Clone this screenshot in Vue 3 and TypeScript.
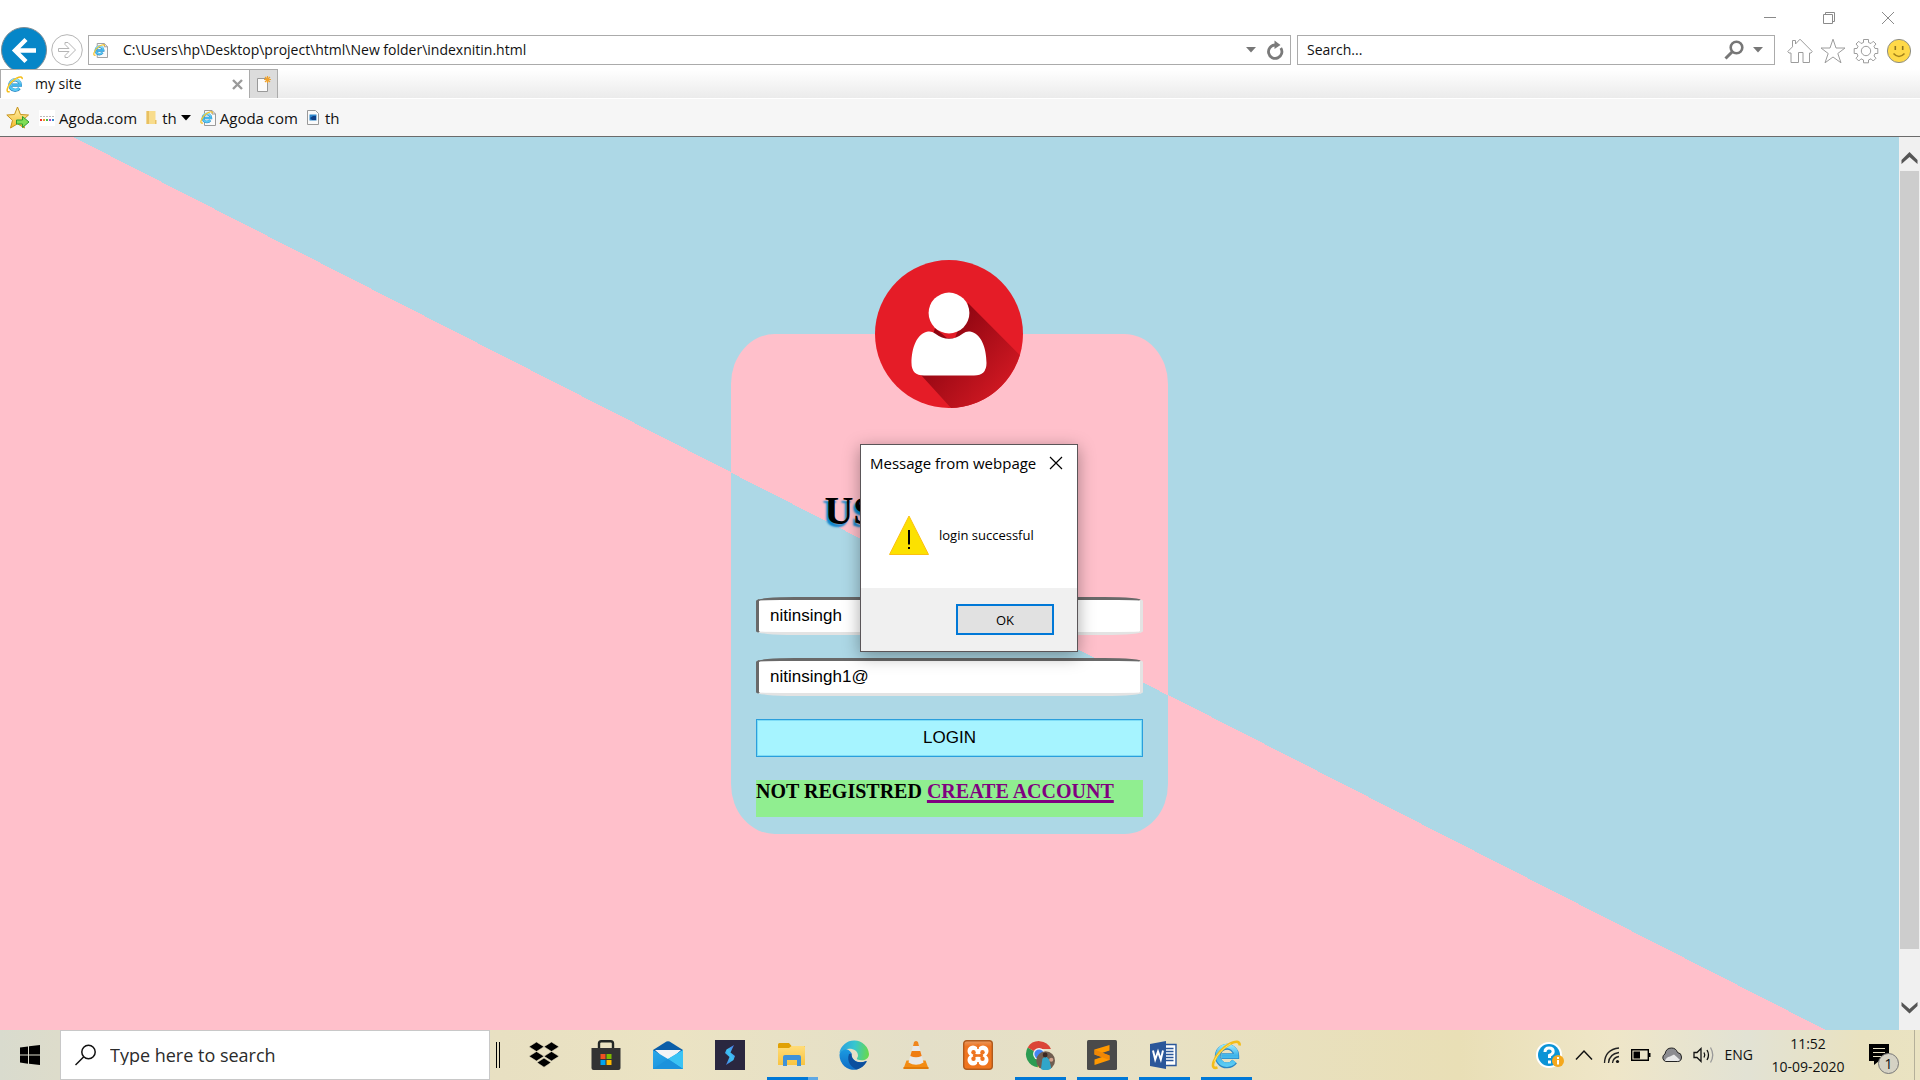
<script setup lang="ts">
import { ref } from 'vue'

interface TaskApp {
  id: string
  label: string
  state: 'idle' | 'open' | 'stacked'
}

const username = ref('nitinsingh')
const password = ref('nitinsingh1@')
const address = ref('C:\\Users\\hp\\Desktop\\project\\html\\New folder\\indexnitin.html')
const alertOpen = ref(true)

const apps: TaskApp[] = [
  { id: 'dropbox', label: 'Dropbox', state: 'idle' },
  { id: 'store', label: 'Store', state: 'idle' },
  { id: 'mail', label: 'Mail', state: 'idle' },
  { id: 'bolt', label: 'Editor', state: 'idle' },
  { id: 'folder', label: 'File Explorer', state: 'stacked' },
  { id: 'edge', label: 'Edge', state: 'idle' },
  { id: 'vlc', label: 'VLC', state: 'idle' },
  { id: 'xampp', label: 'XAMPP', state: 'idle' },
  { id: 'chrome', label: 'Chrome', state: 'open' },
  { id: 'sublime', label: 'Sublime Text', state: 'open' },
  { id: 'word', label: 'Word', state: 'open' },
  { id: 'ie', label: 'Internet Explorer', state: 'open' },
]
</script>

<template>
  <div class="screen">
    <svg class="sprites" width="0" height="0" aria-hidden="true">
      <defs>
        <linearGradient id="g-ie" x1="0" y1="0" x2="0" y2="1">
          <stop offset="0" stop-color="#8fe3fb" /><stop offset="0.5" stop-color="#3fb4ea" /><stop offset="1" stop-color="#5bcbf3" />
        </linearGradient>
        <linearGradient id="g-mail" x1="0" y1="0" x2="1" y2="1">
          <stop offset="0" stop-color="#2aa9ea" /><stop offset="1" stop-color="#1689d6" />
        </linearGradient>
        <linearGradient id="g-folder" x1="0" y1="0" x2="0" y2="1">
          <stop offset="0" stop-color="#ffdc78" /><stop offset="1" stop-color="#f9c440" />
        </linearGradient>
        <linearGradient id="g-edge-top" x1="0" y1="0.4" x2="1" y2="0.5">
          <stop offset="0" stop-color="#2a9fe0" /><stop offset="0.5" stop-color="#37c6cf" /><stop offset="1" stop-color="#68d94c" />
        </linearGradient>
        <linearGradient id="g-edge-left" x1="0" y1="0" x2="0" y2="1">
          <stop offset="0" stop-color="#1b9be3" /><stop offset="1" stop-color="#0f6cc4" />
        </linearGradient>
        <linearGradient id="g-bolt" x1="1" y1="0" x2="0" y2="1">
          <stop offset="0" stop-color="#5468e8" /><stop offset="0.5" stop-color="#3cc5f3" /><stop offset="1" stop-color="#4a6fe0" />
        </linearGradient>
        <linearGradient id="g-xampp" x1="0" y1="0" x2="0" y2="1">
          <stop offset="0" stop-color="#e89a62" /><stop offset="0.2" stop-color="#ee7420" /><stop offset="1" stop-color="#f0741c" />
        </linearGradient>
        <linearGradient id="g-shadow" x1="0.2" y1="0.2" x2="0.85" y2="0.8">
          <stop offset="0" stop-color="#8a0410" /><stop offset="1" stop-color="#cf1822" />
        </linearGradient>
        <linearGradient id="g-star" x1="0" y1="0" x2="0" y2="1">
          <stop offset="0" stop-color="#fff2b0" /><stop offset="1" stop-color="#f5bb28" />
        </linearGradient>

        <symbol id="i-ie" viewBox="0 0 30 30">
          <path d="M23.600 21.500A9.300 9.300 0 1 1 25.300 16.200H10.500" fill="none" stroke="#2b86c4" stroke-width="5.800" />
          <path d="M23.300 21.200A9.300 9.300 0 1 1 25.300 16H10.500" fill="none" stroke="url(#g-ie)" stroke-width="4.400" />
          <path d="M6.500 27.400C2.500 29 1 26.500 2.700 21.800C5 15 12.500 7 19.500 3.500C24.500 1 29.300 1 28.500 5.500" fill="none" stroke="#f4bd18" stroke-width="2.600" />
          <path d="M3.300 21.500C5.500 15 13 7.300 19.800 3.900" fill="none" stroke="#ffe56b" stroke-width="1" />
        </symbol>
        <symbol id="i-iepage" viewBox="0 0 16 16">
          <path d="M4.500 0.500H12L15.500 4V15.500H4.500Z" fill="#fafafa" stroke="#9a9a9a" />
          <path d="M12 0.500V4H15.500" fill="none" stroke="#9a9a9a" />
          <use href="#i-ie" x="0" y="1" width="13" height="13" />
        </symbol>
        <symbol id="i-dropbox" viewBox="0 0 30 30">
          <path d="M7.500 2L15 6.700L7.500 11.500L0 6.700ZM22.500 2L30 6.700L22.500 11.500L15 6.700ZM7.500 11.500L15 16.300L7.500 21L0 16.300ZM22.500 11.500L30 16.300L22.500 21L15 16.300ZM15 18L22 22.600L15 27.200L8 22.600Z" fill="#000" stroke="#e8dfc2" stroke-width="0.600" />
        </symbol>
        <symbol id="i-store" viewBox="0 0 30 30">
          <path d="M8 9V3.500Q8 1.200 10.300 1.200H19.700Q22 1.200 22 3.500V9" fill="none" stroke="#222625" stroke-width="2.400" />
          <path d="M0.500 8H29.500V28Q29.500 30 27.500 30H2.500Q0.500 30 0.500 28Z" fill="#333" />
          <path d="M9.500 14H14.500V19H9.500Z" fill="#f25022" /><path d="M15.500 14H20.500V19H15.500Z" fill="#7fba00" />
          <path d="M9.500 20H14.500V25H9.500Z" fill="#00a4ef" /><path d="M15.500 20H20.500V25H15.500Z" fill="#ffb900" />
        </symbol>
        <symbol id="i-mail" viewBox="0 0 30 30">
          <path d="M0 10L13.500 1.600Q15 0.800 16.500 1.600L30 10V14H0Z" fill="#0b5ea8" />
          <path d="M2 10H28L15 22Z" fill="#f4f4f6" />
          <path d="M0 10L15 19L30 10V29H0Z" fill="url(#g-mail)" />
          <path d="M30 10V29L15 19Z" fill="#3bc3f4" /><path d="M0 29L15 19L30 29Z" fill="#1b92dc" />
        </symbol>
        <symbol id="i-bolt" viewBox="0 0 30 30">
          <path d="M0 0H30V30H0Z" fill="#2a2740" />
          <path d="M19 5L11.500 9.500L10 13L14.500 17L11 25L18.500 20L20 16L15.500 12.500Z" fill="url(#g-bolt)" />
        </symbol>
        <symbol id="i-folder" viewBox="0 0 30 30">
          <path d="M1 4.500Q1 3 2.500 3H12L14.500 6H28V15H1Z" fill="#e0a106" />
          <path d="M1 8H12L14.500 6H27Q28 6 28 7V25H1Z" fill="url(#g-folder)" />
          <path d="M6 26V17Q6 15 8 15H22Q24 15 24 17V26H20V20H10V26Z" fill="#3f92d8" />
        </symbol>
        <symbol id="i-edge" viewBox="0 0 30 30">
          <path d="M0.500 15A14.500 14.500 0 0 0 17 29.700C20 29 25 26 27.500 21C22 24 12 22 12.500 13C8 6 1 9 0.500 15Z" fill="url(#g-edge-left)" />
          <path d="M10 14C7 22 13 28 18 29.500C22 28 25.500 26 27.700 21.700Q28 20.500 26.500 21.200C20 24 12 21 12.500 13.500Z" fill="#0c4f9e" />
          <path d="M0.300 13A15 15 0 0 1 30 14C30 20 23 21.500 18.500 19.500C17 18.500 19 18 19 15.500C19 8 7 6 0.300 13Z" fill="url(#g-edge-top)" />
        </symbol>
        <symbol id="i-vlc" viewBox="0 0 30 30">
          <path d="M5.500 20.500H24.500L27.500 28.500H2.500Z" fill="#f38c13" /><path d="M2.500 27H27.500V29H2.500Z" fill="#e27a08" />
          <path d="M13 2Q15 0 17 2L22.500 22.500Q15 27 7.500 22.500Z" fill="#e8e8e8" />
          <path d="M13 2Q15 0 17 2L18 6H12Z" fill="#f0861c" />
          <path d="M10.700 11H19.300L20.700 16Q15 18.500 9.300 16Z" fill="#ef7d14" />
        </symbol>
        <symbol id="i-xampp" viewBox="0 0 30 30">
          <rect x="0.700" y="0.700" width="28.600" height="28.600" rx="3" fill="url(#g-xampp)" stroke="#b05a1c" stroke-width="1.400" />
          <g fill="#fff">
            <circle cx="10" cy="11" r="5.500" /><circle cx="20" cy="11" r="5.500" />
            <circle cx="10" cy="20" r="5.500" /><circle cx="20" cy="20" r="5.500" />
            <path d="M9 11H21V20H9Z" />
          </g>
          <path d="M15 4V9M15 22V27" stroke="#ee7420" stroke-width="1.600" />
          <path d="M11.500 15.500H18.500" stroke="#ee7420" stroke-width="2.600" />
          <g fill="#ee7420">
            <circle cx="10.500" cy="12.300" r="2.200" /><circle cx="19.500" cy="12.300" r="2.200" />
            <circle cx="10.500" cy="18.700" r="2.200" /><circle cx="19.500" cy="18.700" r="2.200" />
            <circle cx="11.800" cy="15.500" r="1.900" /><circle cx="18.200" cy="15.500" r="1.900" />
          </g>
        </symbol>
        <symbol id="i-chrome" viewBox="0 0 32 32">
          <path d="M15 15L2.900 8A14 14 0 0 0 13.500 29L21 20Z" fill="#2c9c52" />
          <path d="M15 15H29A14 14 0 0 1 13.500 29Z" fill="#fbc525" />
          <path d="M15 15L2.900 8A14 14 0 0 1 27.700 9.500H15Z" fill="#db4437" />
          <circle cx="15" cy="15" r="6.400" fill="#f3f3f3" /><circle cx="15" cy="15" r="5" fill="#4285f4" />
          <circle cx="22" cy="22" r="10" fill="#705d50" />
          <path d="M17 31L18.500 20L22 17L26 21L28 30A10 10 0 0 1 17 31Z" fill="#31a6c9" />
          <circle cx="21.500" cy="16" r="2.600" fill="#3b2822" /><circle cx="28" cy="21" r="2.200" fill="#d3a28c" />
        </symbol>
        <symbol id="i-sublime" viewBox="0 0 30 30">
          <rect width="30" height="30" rx="1.500" fill="#4a4a4a" />
          <path d="M22.500 5V10.500L15 13L22.500 15.500V20L7.500 25V19.500L15 17L7.500 14.500V9.500Z" fill="#ff9800" />
          <path d="M7.500 9.500V14.500L22.500 20V15.500Z" fill="#f08705" />
        </symbol>
        <symbol id="i-word" viewBox="0 0 30 30">
          <path d="M15 4.500H27V25.500H15Z" fill="#fff" stroke="#2b579a" stroke-width="1.400" />
          <path d="M16 8.500H24.500M16 11.500H24.500M16 14.500H24.500M16 17.500H24.500M16 20.500H24.500" stroke="#2b579a" stroke-width="1.400" />
          <path d="M1 4L17 1V29L1 26Z" fill="#2b579a" />
          <path d="M4 10.500L6.200 19.500L9 11.500L11.800 19.500L14 10.500" fill="none" stroke="#fff" stroke-width="2" />
        </symbol>
      </defs>
    </svg>

    <header class="browser">
      <div class="titlebar">
        <button class="wbtn" aria-label="Minimize"><svg width="14" height="14"><path d="M1 6.500H13" stroke="#8a8a8a" /></svg></button>
        <button class="wbtn" aria-label="Restore"><svg width="14" height="14" fill="none" stroke="#8a8a8a"><path d="M1.500 3.500H10.500V12.500H1.500ZM3.500 3.500V1.500H12.500V10.500H10.500" /></svg></button>
        <button class="wbtn" aria-label="Close"><svg width="14" height="14"><path d="M1 1L13 13M13 1L1 13" stroke="#8a8a8a" /></svg></button>
      </div>

      <div class="nav">
        <button class="back" aria-label="Back">
          <svg width="46" height="46" viewBox="0 0 46 46">
            <circle cx="23" cy="23" r="22.500" fill="#0686c8" stroke="#7d8b93" />
            <path d="M25 12.500L14 23.500L25 34.500M14.500 23.500H35" fill="none" stroke="#fff" stroke-width="4.400" />
          </svg>
        </button>
        <button class="forward" aria-label="Forward">
          <svg width="32" height="32" viewBox="0 0 32 32" fill="none" stroke="#b5b5b5">
            <circle cx="16" cy="16" r="15.300" />
            <path d="M7.500 14.500H18L14 10.500V8.500H17L24.500 16L17 23.500H14V21.500L18 17.500H7.500Z" />
          </svg>
        </button>
        <div class="field address">
          <svg width="15" height="15"><use href="#i-iepage" /></svg>
          <input v-model="address" aria-label="Address" />
          <svg class="drop" width="10" height="6"><path d="M0 0H10L5 5.500Z" fill="#777" /></svg>
          <button class="plain" aria-label="Refresh">
            <svg width="18" height="20" viewBox="0 0 18 20"><path d="M14.800 8A6.700 6.700 0 1 1 9 5" fill="none" stroke="#7a7a7a" stroke-width="2.800" /><path d="M8.500 0.500L14.500 5L8.500 9Z" fill="#7a7a7a" /></svg>
          </button>
        </div>
        <div class="field search">
          <input placeholder="Search..." aria-label="Search" />
          <button class="plain" aria-label="Go">
            <svg width="20" height="20" viewBox="0 0 20 20" fill="none" stroke="#777"><circle cx="12.500" cy="7.500" r="5.800" stroke-width="2.600" /><path d="M8.500 11.500L1.500 18.500" stroke-width="3" /></svg>
          </button>
          <svg class="drop" width="10" height="6"><path d="M0 0H10L5 5.500Z" fill="#777" /></svg>
        </div>
        <div class="tools">
          <button class="plain" aria-label="Home">
            <svg width="26" height="26" viewBox="0 0 26 26" fill="#fff" stroke="#9c9c9c"><path d="M0.800 13.500L5.500 8.800V2.500H8.500V6L13 1.200L25.200 13.500L24 15H22.500V24.500H16V14.500H11.500V24.500H4V15H2Z" /></svg>
          </button>
          <button class="plain" aria-label="Favorites">
            <svg width="26" height="26" viewBox="0 0 26 26" fill="#fff" stroke="#9c9c9c"><path d="M13 1.200L16 10H25L17.800 15.500L21 24.800L13 19L5 24.800L8.200 15.500L1 10H10Z" /></svg>
          </button>
          <button class="plain" aria-label="Tools">
            <svg width="26" height="26" viewBox="0 0 26 26" fill="#fff" stroke="#9c9c9c"><path d="M10.500 1.500H15.500V4.500L18 5.500L20.200 3.300L23 6L21 8.300L22 10.500H24.800V15.500H22L21 18L23 20.200L20.200 23L18 20.800L15.500 22V24.800H10.500V22L8 20.800L5.800 23L3 20.200L5 18L4 15.500H1.200V10.500H4L5 8.300L3 6L5.800 3.300L8 5.500L10.500 4.500Z" /><circle cx="13" cy="13" r="4.700" /></svg>
          </button>
          <button class="plain" aria-label="Feedback">
            <svg width="26" height="26" viewBox="0 0 26 26"><circle cx="13" cy="13" r="11.600" fill="#ffd948" stroke="#8e8e86" /><path d="M9.300 8V12M16.700 8V12" stroke="#8d7420" stroke-width="1.600" /><path d="M7.500 15.500Q13 21.500 18.500 15.500" fill="none" stroke="#a5841c" stroke-width="1.600" /></svg>
          </button>
        </div>
      </div>

      <div class="tabs">
        <div class="tab">
          <svg width="17" height="17"><use href="#i-ie" /></svg>
          <span>my site</span>
          <button class="plain" aria-label="Close tab"><svg width="11" height="11"><path d="M1 1L10 10M10 1L1 10" stroke="#9a9a9a" stroke-width="2.400" /></svg></button>
        </div>
        <button class="newtab" aria-label="New tab">
          <svg width="14" height="16" viewBox="0 0 14 16"><path d="M0.500 2.500H10.500V15.500H0.500Z" fill="#fbfbfb" stroke="#999" /><path d="M10.500 0V7M7 3.500H14M8 1L13 6M13 1L8 6" stroke="#f0a22c" stroke-width="1.200" /></svg>
        </button>
      </div>

      <nav class="favs">
        <button class="plain star" aria-label="Add to favorites">
          <svg width="24" height="24" viewBox="0 0 24 24"><path d="M11.500 1L14.500 8.500L22.500 9L16.500 14.300L18.500 22L11.500 17.800L4.500 22L6.500 14.300L0.800 9L8.500 8.500Z" fill="url(#g-star)" stroke="#c8941c" /><path d="M10.500 14H16.500V10.500L23 16L16.500 21.500V18H10.500Z" fill="#7fdd55" stroke="#2f9c31" /></svg>
        </button>
        <a href="#"><svg width="16" height="16" viewBox="0 0 16 16"><path d="M0 0H16V16H0Z" fill="#fff" /><path d="M1 6.500H15" stroke="#bbb" stroke-dasharray="2 1" /><path d="M1 10H3" stroke="#e33" stroke-width="2" /><path d="M4 10H6" stroke="#f09a2c" stroke-width="2" /><path d="M7 10H9" stroke="#4b4" stroke-width="2" /><path d="M10 10H12" stroke="#a4c" stroke-width="2" /><path d="M13 10H15" stroke="#38c" stroke-width="2" /></svg>Agoda.com</a>
        <a href="#"><svg width="12" height="16" viewBox="0 0 12 16"><path d="M0.500 1H9.500V14H0.500Z" fill="#f8dc8c" /><path d="M0.500 1H3V14H0.500Z" fill="#e8c062" /><path d="M9 10H10.500V14H9Z" fill="#e8c062" /></svg>th<svg width="10" height="6"><path d="M0 0H10L5 5.500Z" /></svg></a>
        <a href="#"><svg width="16" height="16"><use href="#i-iepage" /></svg>Agoda com</a>
        <a href="#"><svg width="14" height="15" viewBox="0 0 14 15"><path d="M0.500 0.500H8.500L11.500 3.500V14.500H0.500Z" fill="#fafafa" stroke="#999" /><path d="M2.500 4.500H9.500V10.500H2.500Z" fill="#2b86cc" /><path d="M3 8L6 6H9V10H5Z" fill="#0d3f86" /></svg>th</a>
      </nav>
    </header>

    <div class="viewport">
      <main class="page">
        <form class="card" @submit.prevent="alertOpen = true">
          <svg class="avatar" width="148" height="148" viewBox="0 0 148 148" role="img" aria-label="User">
            <circle cx="74" cy="74" r="74" fill="#e51c27" />
            <path d="M93 43L144.700 95A74 74 0 0 1 76 148L46 115L60 68L72 78L80 78Z" fill="url(#g-shadow)" />
            <circle cx="74" cy="53" r="20.400" fill="#fff" />
            <path d="M53 71.500Q57 71 60 73.500Q74 84 88 73.500Q91 71 95 71.500C106 73 111.500 88 111.500 103Q111.500 115.500 99 115.500H49Q36.500 115.500 36.500 103C36.500 88 42 73 53 71.500Z" fill="#fff" />
          </svg>
          <h1>USER LOGIN</h1>
          <div class="rows">
            <input v-model="username" type="text" aria-label="Username" />
            <input v-model="password" type="text" aria-label="Password" />
            <button type="submit">LOGIN</button>
            <p>NOT REGISTRED <a href="#">CREATE ACCOUNT</a></p>
          </div>
        </form>
      </main>
      <div class="scrollbar">
        <button class="arrow" aria-label="Scroll up"><svg width="17" height="14"><path d="M0.500 13V9L8.500 1L16.500 9V13L8.500 6Z" fill="#555" /></svg></button>
        <div class="track"><div class="thumb"></div></div>
        <button class="arrow" aria-label="Scroll down"><svg width="17" height="14"><path d="M0.500 1V5L8.500 12.500L16.500 5V1L8.500 8Z" fill="#555" /></svg></button>
      </div>
    </div>

    <section v-if="alertOpen" class="alert" role="alertdialog" aria-labelledby="alert-title" aria-describedby="alert-text">
      <div class="alert-head">
        <span id="alert-title">Message from webpage</span>
        <button class="plain" aria-label="Close" @click="alertOpen = false"><svg width="14" height="14"><path d="M1 1L13 13M13 1L1 13" stroke="#000" stroke-width="1.200" /></svg></button>
      </div>
      <div class="alert-body">
        <svg width="40" height="40" viewBox="0 0 40 40"><path d="M20 1L39.500 39.500H0.500Z" fill="#fce100" stroke="#fcc010" /><path d="M20 15V29.500M20 32V34" stroke="#000" stroke-width="2" /></svg>
        <span id="alert-text">login successful</span>
      </div>
      <div class="alert-foot"><button @click="alertOpen = false">OK</button></div>
    </section>

    <footer class="taskbar">
      <button class="start" aria-label="Start">
        <svg width="20" height="20" viewBox="0 0 20 20"><path d="M0 2.500L8 1.400V9.500H0ZM9 1.200L20 0V9.500H9ZM0 10.500H8V18.700L0 17.500ZM9 10.500H20V20L9 18.800Z" /></svg>
      </button>
      <label class="find">
        <svg width="22" height="22" viewBox="0 0 22 22" fill="none" stroke="#111" stroke-width="1.500"><circle cx="13.500" cy="8" r="6.700" /><path d="M8.800 12.700L0.500 21" /></svg>
        <input placeholder="Type here to search" aria-label="Type here to search" />
      </label>
      <span class="grip"></span>
      <div class="apps">
        <button v-for="app in apps" :key="app.id" :class="['app', app.state]" :aria-label="app.label">
          <svg width="30" height="30"><use :href="'#i-' + app.id" /></svg>
        </button>
      </div>
      <div class="tray">
        <svg width="30" height="28" viewBox="0 0 30 28"><circle cx="14" cy="14" r="13" fill="#fff" /><circle cx="14" cy="14" r="11" fill="#0a93d6" /><path d="M10 11Q10 7 14 7Q18.200 7 18.200 10.500Q18.200 13 14.500 14.500V17M14.500 19.500V22.500" fill="none" stroke="#fff" stroke-width="3" /><circle cx="23" cy="20" r="6" fill="#f5a81c" /><path d="M23 16V18M23 19V23.500" stroke="#fff" stroke-width="2" /></svg>
        <svg width="18" height="12" fill="none" stroke="#111" stroke-width="1.500"><path d="M1 10.500L9 2L17 10.500" /></svg>
        <svg width="18" height="18" viewBox="0 0 18 18" fill="none" stroke="#222" stroke-width="1.300"><path d="M1.500 17Q2 3.500 16 2M5.500 17Q6 8 16 6.500M9.500 17Q10 11.500 16 10.500" /><circle cx="14.500" cy="15.500" r="1.600" fill="#111" stroke="none" /></svg>
        <svg width="20" height="12" viewBox="0 0 20 12"><path d="M0.700 0.700H17.300V11.300H0.700Z" fill="none" stroke="#000" stroke-width="1.400" /><path d="M2.500 2.500H9V9.500H2.500ZM18 4H19.500V8H18Z" /></svg>
        <svg width="22" height="16" viewBox="0 0 22 16"><path d="M5 14.500A4 4 0 0 1 4 7Q5 1 10.500 1Q15 1 16.500 5.500Q20.500 6 20.500 10Q20.500 14.500 16.500 14.500Z" fill="#8c8c90" stroke="#222" /><path d="M4 14Q5 10 9 9.500L13 7.500Q16 10 19 13Q18 14 16 14Z" fill="#e8e8e8" /></svg>
        <svg width="22" height="18" viewBox="0 0 22 18" fill="none" stroke="#111" stroke-width="1.300"><path d="M1 6.500H4L8 2.500V15.500L4 11.500H1Z" /><path d="M11 6.500Q12.500 9 11 11.500M14 4Q17 9 14 14" /><path d="M17.500 1.500Q22 9 17.500 16.500" stroke="#999" /></svg>
        <span class="lang">ENG</span>
        <time class="clock"><span>11:52</span><span>10-09-2020</span></time>
        <button class="notes" aria-label="Notifications">
          <svg width="22" height="22" viewBox="0 0 22 22"><path d="M0 0H20V17H10L5 21V17H0Z" /><path d="M4 4.500H16M4 8.500H16M4 12.500H16" stroke="#e8e2c4" stroke-width="1.200" /></svg>
          <span class="badge">1</span>
        </button>
        <span class="peek"></span>
      </div>
    </footer>
  </div>
</template>

<style>
body {
  margin: 0;
}
</style>

<style scoped>
.screen {
  position: relative;
  display: flex;
  flex-direction: column;
  min-height: 100vh;
  background: #fff;
  color: #111;
  font: 15px/20px "Open Sans", "Noto Sans", sans-serif;
}
.sprites {
  position: absolute;
}
button,
input {
  box-sizing: border-box;
  margin: 0;
  font: inherit;
  color: inherit;
}
button {
  padding: 0;
  border: 0;
  background: none;
}
svg {
  display: block;
  flex: none;
}
.plain {
  display: flex;
}

/* browser chrome */
.titlebar {
  display: flex;
  justify-content: flex-end;
  gap: 45px;
  height: 16px;
  padding: 11px 25px 0 0;
}
.wbtn {
  height: 14px;
}
.nav {
  display: flex;
  align-items: flex-start;
  height: 42px;
  padding-left: 1px;
  overflow: hidden;
}
.forward {
  margin: 7px 5px 0 4px;
}
.field {
  display: flex;
  align-items: center;
  box-sizing: border-box;
  height: 30px;
  margin-top: 8px;
  border: 1px solid #ababab;
  font-size: 14px;
}
.field input {
  flex: 1;
  min-width: 0;
  padding: 0;
  border: 0;
  outline: 0;
  background: none;
}
.address {
  flex: 1191;
  padding: 0 6px 0 4px;
}
.address input {
  margin-left: 15px;
}
.address .drop {
  margin-right: 10px;
}
.search {
  flex: 456;
  margin-left: 6px;
  padding: 0 11px 0 9px;
}
.search .drop {
  margin-left: 9px;
}
.field input::placeholder {
  color: #111;
  opacity: 1;
}
.tools {
  display: flex;
  gap: 7px;
  margin: 11px 8px 0 12px;
}
.tabs {
  display: flex;
  height: 29px;
  border-bottom: 1px solid #fff;
  background: linear-gradient(#fff, #ebebeb);
}
.tab {
  display: flex;
  align-items: center;
  box-sizing: border-box;
  width: 250px;
  padding: 0 6px 0 5px;
  border: 1px solid #ababab;
  border-bottom: 0;
  background: #fff;
  font-size: 14px;
}
.tab span {
  flex: 1;
  margin-left: 12px;
}
.newtab {
  display: flex;
  align-items: center;
  justify-content: center;
  width: 28px;
  border: 1px solid #ababab;
  border-width: 1px 1px 0 0;
  background: #dcdcdc;
}
.favs {
  display: flex;
  align-items: center;
  gap: 9px;
  height: 37px;
  padding-left: 6px;
  border-bottom: 1px solid #6b6b6b;
  background: #f6f6f6;
}
.favs a {
  display: flex;
  align-items: center;
  gap: 4px;
  color: #111;
  text-decoration: none;
}

/* web page */
.viewport {
  flex: 1;
  display: flex;
}
.page {
  flex: 1;
  display: flex;
  align-items: center;
  justify-content: center;
  background: linear-gradient(27deg, #ffc0cb 50%, #add8e6 50%);
}
.card {
  display: flex;
  flex-direction: column;
  align-items: center;
  box-sizing: border-box;
  width: 23%;
  min-height: 500px;
  padding: 0 25px;
  border-radius: 10%;
  background: linear-gradient(27deg, #add8e6 50%, #ffc0cb 50%);
}
.avatar {
  margin-top: -74px;
}
h1 {
  margin: 80px 0 63px;
  font: bold 40px/46px "Liberation Serif", serif;
  color: #000;
  text-shadow: -2px 3px 2px #0a84cc;
}
.rows {
  display: grid;
  gap: 23px;
  width: 100%;
  font: 17px/20px "Liberation Sans", sans-serif;
  color: #000;
}
.rows input {
  width: 100%;
  height: 38px;
  padding: 0 11px;
  border: 3px solid;
  border-color: #696969 #e3e3e3 #e3e3e3 #696969;
  border-radius: 10%;
  background: #fff;
}
.rows button {
  height: 38px;
  border: 1px solid #2a9fdc;
  background: #a6f4ff;
  box-shadow: inset 0 0 0 1px #7edcf6;
}
.rows p {
  height: 37px;
  margin: 0;
  background: #90ee90;
  font: bold 20px/23px "Liberation Serif", serif;
  white-space: nowrap;
}
.rows a {
  color: #800080;
  text-decoration: underline 3px;
  text-underline-offset: 2px;
  text-decoration-skip-ink: none;
}
.scrollbar {
  display: flex;
  flex-direction: column;
  width: 21px;
  background: #f0f0f0;
}
.arrow {
  display: flex;
  align-items: center;
  justify-content: center;
  height: 34px;
  padding-top: 8px;
}
.arrow:last-child {
  padding: 0 0 10px;
}
.track {
  flex: 1;
  display: flex;
  padding: 0 1px 47px;
}
.thumb {
  flex: 1;
  background: #cdcdcd;
}

/* message box */
.alert {
  position: absolute;
  top: 444px;
  left: calc(50% - 100px);
  box-sizing: border-box;
  width: 218px;
  border: 1px solid #5a5558;
  background: #fff;
  box-shadow: 0 4px 16px rgba(0, 0, 0, 0.35);
  color: #000;
}
.alert-head {
  display: flex;
  align-items: center;
  justify-content: space-between;
  height: 36px;
  padding: 0 14px 0 9px;
  white-space: nowrap;
}
.alert-body {
  display: flex;
  align-items: center;
  gap: 10px;
  height: 107px;
  padding-left: 28px;
  font-size: 13px;
}
.alert-foot {
  display: flex;
  align-items: center;
  justify-content: flex-end;
  height: 63px;
  padding-right: 23px;
  background: #f0f0f0;
}
.alert-foot button {
  width: 98px;
  height: 31px;
  border: 2px solid #0078d7;
  background: #e1e1e1;
  font-size: 13px;
}

/* taskbar */
.taskbar {
  display: flex;
  height: 50px;
  background: linear-gradient(90deg, #d9dbce 0, #dddccb 3%, #e8e0c2 26%, #ebe3c3 35%, #e4dfc8 48%, #e8e1c4 60%, #e9dfb6 76%, #efe6c8 84%, #e2e2d4 91%, #e9e2c0 97%, #eae3c2);
}
.start {
  display: flex;
  align-items: center;
  justify-content: center;
  width: 60px;
}
.find {
  display: flex;
  align-items: center;
  box-sizing: border-box;
  width: 430px;
  padding-left: 14px;
  border: 1px solid #c8c8c8;
  background: #fff;
}
.find input {
  flex: 1;
  min-width: 0;
  margin-left: 13px;
  padding: 0;
  border: 0;
  outline: 0;
  background: none;
  font-size: 18px;
}
.find input::placeholder {
  color: #2b2b2b;
  opacity: 1;
}
.grip {
  width: 2px;
  height: 26px;
  margin: 12px 13px 0 6px;
  border: 1px solid #000;
  border-width: 0 1px;
}
.apps {
  display: flex;
}
.app {
  display: flex;
  align-items: center;
  justify-content: center;
  width: 62px;
  background: no-repeat center bottom / 51px 3px;
}
.app.open {
  background-image: linear-gradient(#0078d7, #0078d7);
}
.app.stacked {
  background-image: linear-gradient(90deg, #0078d7 80%, #5fa8e4 80%);
}
.tray {
  display: flex;
  align-items: center;
  gap: 10px;
  margin-left: auto;
  padding-right: 5px;
}
.lang {
  font-size: 14px;
}
.clock {
  display: flex;
  flex-direction: column;
  width: 78px;
  margin-left: 6px;
  font-size: 14px;
  line-height: 23px;
  text-align: center;
}
.notes {
  position: relative;
  margin: 0 5px 0 12px;
  padding-right: 8px;
}
.badge {
  position: absolute;
  top: 9px;
  right: 0;
  box-sizing: border-box;
  width: 21px;
  height: 21px;
  border: 1px solid #777;
  border-radius: 50%;
  background: #d5d2c4;
  font-size: 14px;
  line-height: 19px;
  text-align: center;
}
.peek {
  align-self: stretch;
  width: 1px;
  background: #b5b09a;
}
</style>
